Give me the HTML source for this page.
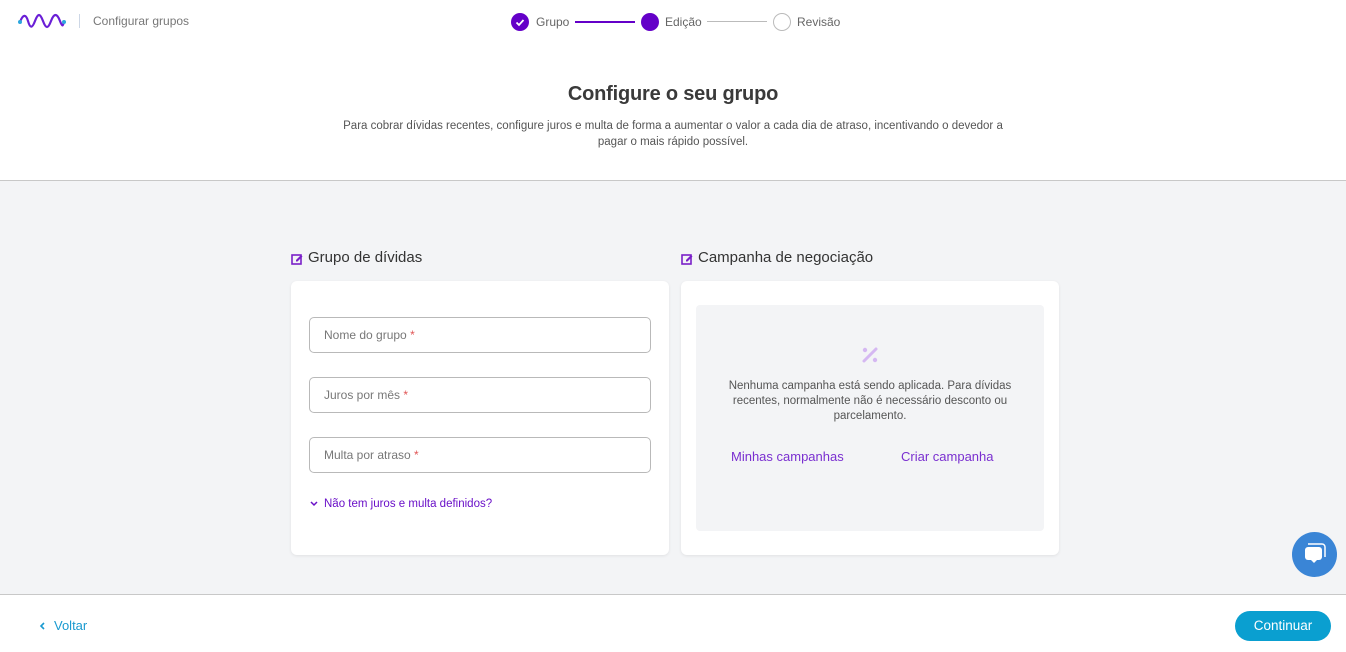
<!DOCTYPE html>
<html><head><meta charset="utf-8"><style>
*{box-sizing:border-box;margin:0;padding:0}
body{width:1346px;height:652px;overflow:hidden;font-family:"Liberation Sans",sans-serif;background:#fff;position:relative;color:#444}
.abs{position:absolute}
.top{height:181px;border-bottom:1px solid #c8c8c8;background:#fff;position:absolute;left:0;top:0;width:1346px}
.mid{position:absolute;top:181px;left:0;width:1346px;height:414px;background:#f3f4f6;border-bottom:1px solid #c8c8c8}
.card{position:absolute;background:#fff;border-radius:6px;box-shadow:0 1px 3px rgba(0,0,0,.08)}
.inp{position:absolute;left:18px;width:342px;height:36px;border:1px solid #b9b9b9;border-radius:5px;font-size:12px;color:#777;padding:10px 14px}
.inp b{color:#e05555;font-weight:normal}
h2{font-size:15px;font-weight:normal;color:#333}
</style></head><body>
<div class="top">
<svg class="abs" style="left:17px;top:12px" width="50" height="18" viewBox="0 0 50 18"><path d="M3 10 C6 2,9 2,11 9 S15 17,18 9 S23 1,26 9 S31 17,34 9 S40 1,43 9 S46 12,47 10" fill="none" stroke="#6a1fd6" stroke-width="2.2" stroke-linecap="round"/><circle cx="3" cy="10" r="2" fill="#2ca7de"/><circle cx="47" cy="10" r="2" fill="#2ca7de"/></svg>
<div class="abs" style="left:79px;top:14px;width:1px;height:14px;background:#cdd7e6"></div>
<div class="abs" style="left:93px;top:14px;font-size:12px;color:#777">Configurar grupos</div>
<div class="abs" style="left:511px;top:13px;width:18px;height:18px;border-radius:50%;background:#6400c8"></div>
<svg class="abs" style="left:511px;top:13px" width="18" height="18"><path d="M5.5 9.5l2.5 2.5 4.5-5" fill="none" stroke="#fff" stroke-width="1.8"/></svg>
<div class="abs" style="left:536px;top:15px;font-size:12px;color:#666">Grupo</div>
<div class="abs" style="left:575px;top:21px;width:60px;height:2px;background:#6400c8"></div>
<div class="abs" style="left:641px;top:13px;width:18px;height:18px;border-radius:50%;background:#6400c8"></div>
<div class="abs" style="left:665px;top:15px;font-size:12px;color:#666">Edição</div>
<div class="abs" style="left:707px;top:21px;width:60px;height:1px;background:#bbb"></div>
<div class="abs" style="left:773px;top:13px;width:18px;height:18px;border-radius:50%;border:1px solid #bbb"></div>
<div class="abs" style="left:797px;top:15px;font-size:12px;color:#666">Revisão</div>
<div class="abs" style="left:0;width:1346px;top:83px;text-align:center;font-size:20px;font-weight:bold;color:#3a3a3a;letter-spacing:-0.2px">Configure o seu grupo</div>
<div class="abs" style="left:333px;width:680px;top:118px;text-align:center;font-size:11.5px;line-height:16px;color:#555">Para cobrar dívidas recentes, configure juros e multa de forma a aumentar o valor a cada dia de atraso, incentivando o devedor a pagar o mais rápido possível.</div>
</div>
<div class="mid">
<svg class="abs" style="left:291px;top:72px" width="12" height="12" viewBox="0 0 12 12"><rect x="1" y="2" width="9" height="9" fill="none" stroke="#7a1fc8" stroke-width="1.6"/><path d="M5 7l5-5 1.5 1.5-5 5H5z" fill="#7a1fc8"/></svg>
<h2 class="abs" style="left:308px;top:68px">Grupo de dívidas</h2>
<svg class="abs" style="left:681px;top:72px" width="12" height="12" viewBox="0 0 12 12"><rect x="1" y="2" width="9" height="9" fill="none" stroke="#7a1fc8" stroke-width="1.6"/><path d="M5 7l5-5 1.5 1.5-5 5H5z" fill="#7a1fc8"/></svg>
<h2 class="abs" style="left:698px;top:68px">Campanha de negociação</h2>
<div class="card" style="left:291px;top:100px;width:378px;height:274px">
<div class="inp" style="top:36px">Nome do grupo <b>*</b></div>
<div class="inp" style="top:96px">Juros por mês <b>*</b></div>
<div class="inp" style="top:156px">Multa por atraso <b>*</b></div>
<svg class="abs" style="left:18px;top:219px" width="10" height="8"><path d="M2 2l3 3 3-3" fill="none" stroke="#6a10c8" stroke-width="1.5"/></svg>
<div class="abs" style="left:33px;top:217px;font-size:11.5px;color:#6a10c8">Não tem juros e multa definidos?</div>
</div>
<div class="card" style="left:681px;top:100px;width:378px;height:274px">
<div class="abs" style="left:15px;top:24px;width:348px;height:226px;background:#f3f4f6;border-radius:4px">
<svg class="abs" style="left:164px;top:40px" width="20" height="20" viewBox="0 0 20 20"><circle cx="5" cy="5" r="2.2" fill="#d5b8f2"/><circle cx="15" cy="15" r="2.2" fill="#d5b8f2"/><path d="M4 16L16 4" stroke="#d5b8f2" stroke-width="3" stroke-linecap="round"/></svg>
<div class="abs" style="left:20px;width:308px;top:74px;text-align:center;font-size:11.5px;line-height:15px;color:#555">Nenhuma campanha está sendo aplicada. Para dívidas recentes, normalmente não é necessário desconto ou parcelamento.</div>
<div class="abs" style="left:35px;top:144px;font-size:13px;color:#7a2fd0">Minhas campanhas</div>
<div class="abs" style="left:205px;top:144px;font-size:13px;color:#7a2fd0">Criar campanha</div>
</div></div>
<div class="abs" style="left:1292px;top:351px;width:45px;height:45px;border-radius:50%;background:#3a85d6"></div>
<svg class="abs" style="left:1302px;top:361px" width="26" height="24" viewBox="0 0 26 24"><path d="M6 2h14a3 3 0 0 1 3 3v10" fill="none" stroke="#fff" stroke-width="1.5"/><rect x="3" y="5" width="17" height="13" rx="3" fill="#fff"/><path d="M9 18l3 3 3-3z" fill="#fff"/></svg>
</div>
<svg class="abs" style="left:38px;top:621px" width="8" height="10"><path d="M6 2L3 5l3 3" fill="none" stroke="#1a9ad0" stroke-width="1.6"/></svg>
<div class="abs" style="left:54px;top:618px;font-size:13px;color:#1a9ad0">Voltar</div>
<div class="abs" style="left:1235px;top:611px;width:96px;height:30px;border-radius:15px;background:#0a9fd0;color:#fff;font-size:13.5px;text-align:center;line-height:30px">Continuar</div>
</body></html>
